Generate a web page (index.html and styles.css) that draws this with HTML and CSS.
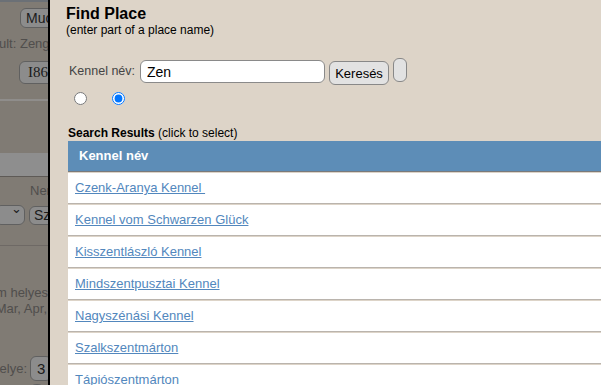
FILE: index.html
```html
<!DOCTYPE html>
<html lang="hu">
<head>
    <meta charset="UTF-8" />
    <title>Find Place</title>
    <link rel="stylesheet" href="styles.css">
</head>
<body>
    <div id="page">
        <div class="topbar"></div>
        <div class="bg-row row-owner">
            <button class="bg-btn">Muc</button>
        </div>
        <div class="bg-row row-result">
            <span class="bg-text">ult: Zeng</span>
        </div>
        <div class="bg-row row-code">
            <button class="bg-btn serif">I86</button>
        </div>
        <div class="bg-sep"></div>
        <div class="bg-band"></div>
        <div class="bg-row row-label">
            <span class="bg-text">Ner</span>
        </div>
        <div class="bg-row row-select">
            <div class="bg-select"><span class="chev">&#8964;</span></div>
            <button class="bg-btn small">Sz</button>
        </div>
        <div class="bg-sep thin"></div>
        <div class="bg-para">
            <div class="bg-line line-one"><span class="bg-text">m helyes</span></div>
            <div class="bg-line line-two"><span class="bg-text">Mar, Apr,</span></div>
        </div>
        <div class="bg-row row-place">
            <div class="bg-line line-place"><span class="bg-text">elye:</span></div>
            <button class="bg-btn small">3</button>
        </div>
        <div class="bg-row row-last">
            <button class="bg-btn small">&nbsp;</button>
        </div>
    </div>

    <div id="overlay"></div>

    <div id="dialog">
        <h1>Find Place</h1>
        <div class="subtitle">(enter part of a place name)</div>

        <form class="search-row">
            <label for="place-input">Kennel név:</label>
            <input id="place-input" type="text" value="Zen" autocomplete="off" />
            <button type="button" class="btn-search">Keresés</button>
            <button type="button" class="btn-empty"></button>
        </form>

        <div class="radio-row">
            <input type="radio" name="mode" />
            <input type="radio" name="mode" checked />
        </div>

        <div class="results-title"><strong>Search Results</strong> (click to select)</div>

        <div class="results">
            <div class="results-head">Kennel név</div>
            <div class="result-row"><a href="#">Czenk-Aranya Kennel&nbsp;</a></div>
            <div class="result-row"><a href="#">Kennel vom Schwarzen Glück</a></div>
            <div class="result-row"><a href="#">Kisszentlászló Kennel</a></div>
            <div class="result-row"><a href="#">Mindszentpusztai Kennel</a></div>
            <div class="result-row"><a href="#">Nagyszénási Kennel</a></div>
            <div class="result-row"><a href="#">Szalkszentmárton</a></div>
            <div class="result-row"><a href="#">Tápiószentmárton</a></div>
        </div>
    </div>
</body>
</html>
```

FILE: styles.css
```css
body {
    margin: 0;
    font-family: "Liberation Sans", Arial, sans-serif;
    background-color: #ddd4c8;
    overflow: hidden;
}

#page {
    width: 48px;
    height: 385px;
    overflow: hidden;
    background: #ddd4c8;
}

.topbar {
    height: 2px;
    background: #b8c2cc;
}

.bg-row {
    display: flex;
    align-items: center;
    white-space: nowrap;
}

.bg-text {
    font-size: 13px;
    line-height: 16px;
    color: #8a8784;
    white-space: nowrap;
}

.bg-btn {
    height: 20px;
    padding: 0 5px;
    border: 1px solid #a6a6a6;
    border-radius: 6px;
    background: #f2f2f2;
    color: #333;
    font-family: "Liberation Sans", Arial, sans-serif;
    font-size: 14px;
    text-align: left;
    flex-shrink: 0;
}

    .bg-btn.serif {
        height: 23px;
        font-family: "Liberation Serif", serif;
        font-size: 15px;
        padding: 0 8px;
    }

    .bg-btn.small {
        height: 19px;
        padding: 0 4px;
    }

.row-owner {
    margin-top: 6px;
    padding-left: 20px;
}

.row-result {
    margin-top: 8px;
    margin-left: -1px;
}

.row-code {
    margin-top: 9px;
    padding-left: 19px;
}

.bg-sep {
    height: 2px;
    margin-top: 15px;
    background: #f6f3ef;
}

    .bg-sep.thin {
        height: 1px;
        margin-top: 20px;
        background: #bdb6ae;
    }

.bg-band {
    height: 23px;
    margin-top: 52px;
    background: #f5f5f5;
    border-bottom: 1px solid #a39c95;
}

.row-label {
    margin-top: 6px;
    padding-left: 30px;
}

.row-select {
    margin-top: 6px;
    gap: 4px;
}

.bg-select {
    width: 28px;
    height: 18px;
    margin-left: -5px;
    border: 1px solid #a6a6a6;
    border-radius: 6px;
    background: #f2f2f2;
    position: relative;
    flex-shrink: 0;
}

    .bg-select .chev {
        position: absolute;
        left: 15px;
        top: -5px;
        font-size: 13px;
        color: #333;
    }

.bg-para {
    margin-top: 39px;
}

.bg-line {
    display: flex;
    justify-content: flex-end;
    width: 48px;
}

    .bg-line.line-two {
        width: 47px;
    }

.row-place {
    margin-top: 39px;
    gap: 3px;
}

    .row-place .line-place {
        width: 27px;
        flex-shrink: 0;
    }

    .row-place .bg-btn.small {
        height: 25px;
        font-size: 15px;
        padding: 0 6px;
    }

.row-last {
    margin-top: 3px;
    padding-left: 30px;
}

#overlay {
    position: absolute;
    top: 0;
    left: 0;
    right: 0;
    bottom: 0;
    background: rgba(0, 0, 0, 0.42);
}

#dialog {
    position: absolute;
    top: 0;
    left: 48px;
    right: 0;
    bottom: 0;
    border-left: 2px solid #000;
    background: #ddd4c8;
    padding: 5px 0 0 16px;
    overflow: hidden;
    color: #000;
}

    #dialog h1 {
        margin: 0;
        font-size: 16px;
        line-height: 18px;
    }

.subtitle {
    font-size: 12px;
    line-height: 14px;
}

.search-row {
    display: flex;
    align-items: flex-start;
    height: 23px;
    margin: 23px 0 0 3px;
}

    .search-row label {
        font-size: 12.5px;
        line-height: 23px;
        color: #444;
        margin-right: 5px;
    }

    .search-row input {
        box-sizing: border-box;
        width: 185px;
        height: 23px;
        padding: 0 6px;
        border: 1px solid #8a8a8a;
        border-radius: 6px;
        background: #fff;
        font-family: "Liberation Sans", Arial, sans-serif;
        font-size: 14px;
        outline: none;
    }

.btn-search {
    box-sizing: border-box;
    width: 60px;
    height: 24px;
    margin: 1px 0 0 4px;
    padding: 0;
    border: 1px solid #888;
    border-radius: 6px;
    background: #e2e2e2;
    font-family: "Liberation Sans", Arial, sans-serif;
    font-size: 13px;
    color: #000;
}

.btn-empty {
    box-sizing: border-box;
    width: 14px;
    height: 24px;
    margin: -2px 0 0 4px;
    padding: 0;
    border: 1px solid #888;
    border-radius: 6px;
    background: #e2e2e2;
}

.radio-row {
    display: flex;
    gap: 25px;
    margin-top: 9px;
    padding-left: 8px;
}

    .radio-row input {
        width: 13px;
        height: 13px;
        margin: 0;
    }

.results-title {
    margin: 21px 0 0 2px;
    font-size: 12px;
    line-height: 14px;
}

.results {
    width: 560px;
    margin: 1px 0 0 2px;
}

.results-head {
    height: 30px;
    line-height: 30px;
    padding-left: 11px;
    background: #5d8db7;
    color: #fff;
    font-size: 13px;
    font-weight: bold;
    border-bottom: 1px solid #7a7a7a;
    margin-bottom: 1px;
}

.result-row {
    height: 30px;
    line-height: 30px;
    padding-left: 7px;
    background: #fff;
    border-bottom: 1px solid #bab4ad;
    margin-bottom: 1px;
    font-size: 13px;
}

    .result-row a {
        color: #5287bd;
        text-decoration: underline;
    }
```
